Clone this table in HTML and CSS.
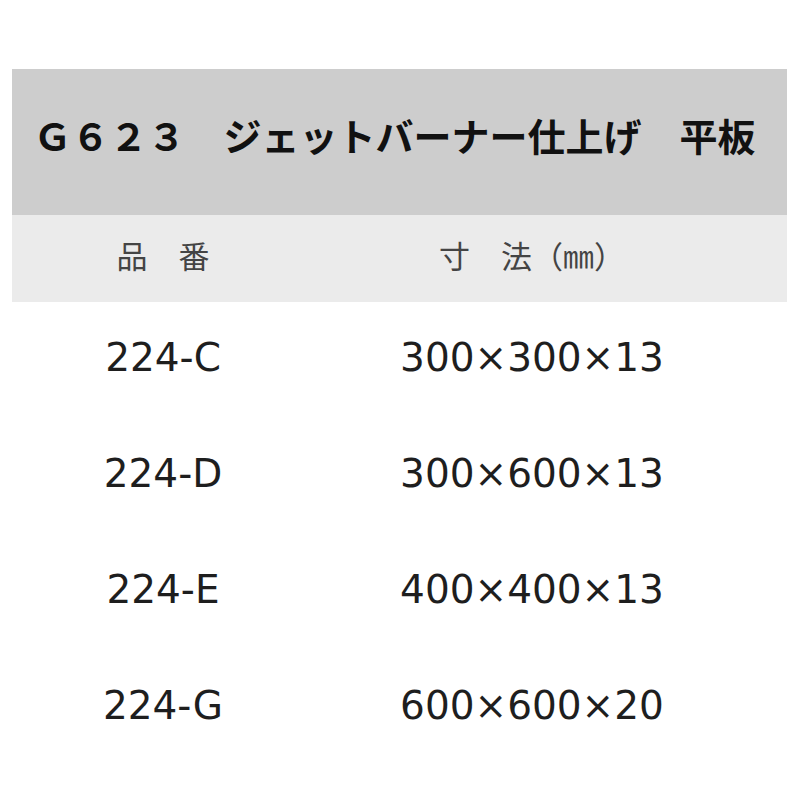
FILE: index.html
```html
<!DOCTYPE html>
<html lang="ja">
<head>
<meta charset="utf-8">
<title>G623 ジェットバーナー仕上げ 平板</title>
<link rel="stylesheet" href="styles.css">
</head>
<body>
<div class="spec">
  <div class="title">Ｇ６２３　ジェットバーナー仕上げ　平板</div>
  <div class="row head">
    <div class="cell">品　番</div>
    <div class="cell">寸　法（㎜）</div>
  </div>
  <div class="row">
    <div class="cell">224-C</div>
    <div class="cell">300×300×13</div>
  </div>
  <div class="row">
    <div class="cell">224-D</div>
    <div class="cell">300×600×13</div>
  </div>
  <div class="row">
    <div class="cell">224-E</div>
    <div class="cell">400×400×13</div>
  </div>
  <div class="row">
    <div class="cell">224-G</div>
    <div class="cell">600×600×20</div>
  </div>
</div>
</body>
</html>
```

FILE: styles.css
```css
html, body {
  margin: 0;
  padding: 0;
  background: #ffffff;
}

.spec {
  width: 775px;
  margin: 69px 0 0 12px;
}

.title {
  box-sizing: border-box;
  height: 146px;
  padding: 0 10px 16px 0;
  background: #cdcdcd;
  display: flex;
  align-items: center;
  justify-content: center;
  font-family: "Noto Sans CJK JP", sans-serif;
  font-weight: 700;
  font-size: 38px;
  color: #111111;
  white-space: nowrap;
}

.row {
  box-sizing: border-box;
  display: grid;
  grid-template-columns: 302px 436px;
  align-items: center;
  height: 116px;
  padding-bottom: 6px;
  font-family: "DejaVu Sans", "Noto Sans CJK JP", sans-serif;
  font-size: 39px;
  color: #1e1e1e;
}

.cell {
  text-align: center;
  white-space: nowrap;
}

.row.head {
  height: 87px;
  padding-bottom: 8px;
  background: #ebebeb;
  font-family: "Noto Sans CJK JP", sans-serif;
  font-size: 31px;
  color: #444444;
}
```
